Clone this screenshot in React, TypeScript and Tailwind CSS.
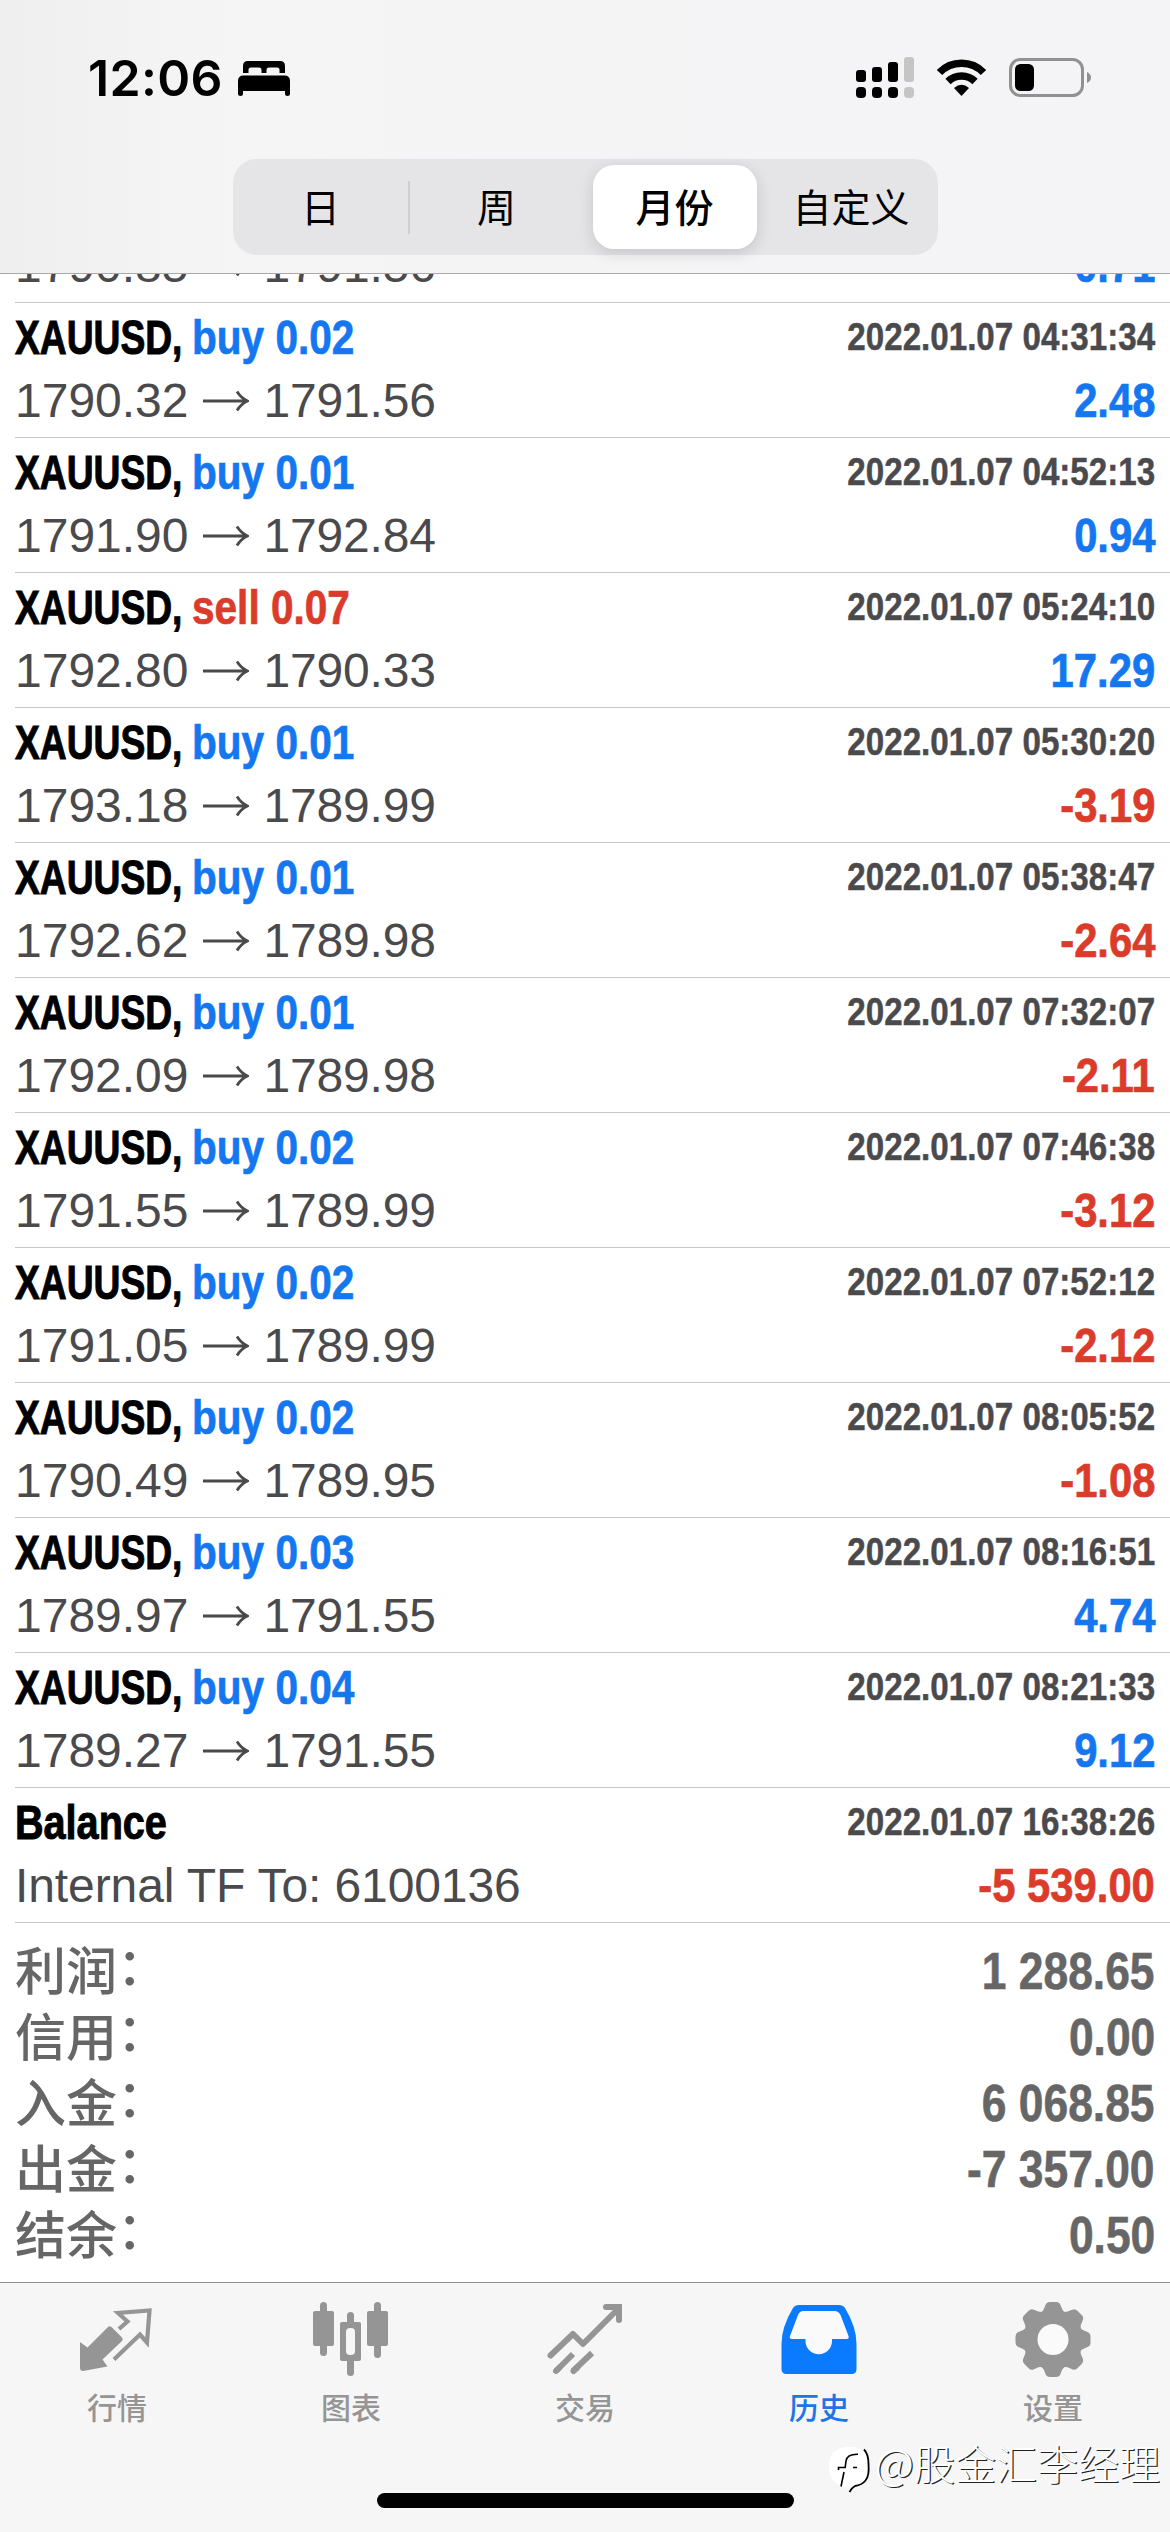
import React, { useState } from 'react';
import clsx from 'clsx';

interface Deal {
  symbol?: string;
  side?: 'buy' | 'sell';
  volume?: string;
  time?: string;
  open?: string;
  close?: string;
  comment?: string;
  profit: string;
}

const deals: Deal[] = [
  { symbol: 'XAUUSD', side: 'buy', volume: '0.02', time: '2022.01.07 04:31:34', open: '1790.32', close: '1791.56', profit: '2.48' },
  { symbol: 'XAUUSD', side: 'buy', volume: '0.01', time: '2022.01.07 04:52:13', open: '1791.90', close: '1792.84', profit: '0.94' },
  { symbol: 'XAUUSD', side: 'sell', volume: '0.07', time: '2022.01.07 05:24:10', open: '1792.80', close: '1790.33', profit: '17.29' },
  { symbol: 'XAUUSD', side: 'buy', volume: '0.01', time: '2022.01.07 05:30:20', open: '1793.18', close: '1789.99', profit: '-3.19' },
  { symbol: 'XAUUSD', side: 'buy', volume: '0.01', time: '2022.01.07 05:38:47', open: '1792.62', close: '1789.98', profit: '-2.64' },
  { symbol: 'XAUUSD', side: 'buy', volume: '0.01', time: '2022.01.07 07:32:07', open: '1792.09', close: '1789.98', profit: '-2.11' },
  { symbol: 'XAUUSD', side: 'buy', volume: '0.02', time: '2022.01.07 07:46:38', open: '1791.55', close: '1789.99', profit: '-3.12' },
  { symbol: 'XAUUSD', side: 'buy', volume: '0.02', time: '2022.01.07 07:52:12', open: '1791.05', close: '1789.99', profit: '-2.12' },
  { symbol: 'XAUUSD', side: 'buy', volume: '0.02', time: '2022.01.07 08:05:52', open: '1790.49', close: '1789.95', profit: '-1.08' },
  { symbol: 'XAUUSD', side: 'buy', volume: '0.03', time: '2022.01.07 08:16:51', open: '1789.97', close: '1791.55', profit: '4.74' },
  { symbol: 'XAUUSD', side: 'buy', volume: '0.04', time: '2022.01.07 08:21:33', open: '1789.27', close: '1791.55', profit: '9.12' },
  { symbol: 'Balance', time: '2022.01.07 16:38:26', comment: 'Internal TF To: 6100136', profit: '-5 539.00' },
];

const summary = [
  { label: '利润', value: '1 288.65' },
  { label: '信用', value: '0.00' },
  { label: '入金', value: '6 068.85' },
  { label: '出金', value: '-7 357.00' },
  { label: '结余', value: '0.50' },
];

const periods = [
  { label: '日', width: 'w-[176px]' },
  { label: '周', width: 'w-[176px]' },
  { label: '月份', width: 'w-[180px]' },
  { label: '自定义', width: 'w-[173px]' },
];

function StatusBar() {
  return (
    <div className="flex h-[159px] items-start justify-between pl-[88px] pr-[78px] pt-[52px]">
      <div className="flex items-start">
        <span className="w-[150px] whitespace-nowrap font-['Inter',sans-serif] text-[50px] font-semibold leading-[52px] tracking-[0.3px] text-black">
          12:06
        </span>
        <svg className="mt-[9px] h-[35px] w-[52px]" viewBox="0 0 52 35" fill="#000">
          <path d="M5 12V5Q5 0 10 0H42Q47 0 47 5V12H41.500V9Q41.500 6.500 39 6.500H31Q28.500 6.500 28.500 9V12H23.500V9Q23.500 6.500 21 6.500H13Q10.500 6.500 10.500 9V12Z" />
          <path d="M0 20Q0 14.500 5.500 14.500H46.500Q52 14.500 52 20V33Q52 35 49.500 35Q47 35 47 33V30H5V33Q5 35 2.500 35Q0 35 0 33Z" />
        </svg>
      </div>
      <div className="flex items-start">
        <svg className="mt-[5px] h-[42px] w-[58px]" viewBox="0 0 58 42" fill="#000">
          <rect x="0" y="13" width="10" height="12" rx="3" />
          <rect x="16" y="10" width="10" height="15" rx="3" />
          <rect x="32" y="5" width="10" height="20" rx="3" />
          <rect x="48" y="0" width="10" height="25" rx="3" fill="#c5c5c5" />
          <rect x="0" y="30" width="10" height="11" rx="4" />
          <rect x="16" y="30" width="10" height="11" rx="4" />
          <rect x="32" y="30" width="10" height="11" rx="4" />
          <rect x="48" y="30" width="10" height="11" rx="4" fill="#c5c5c5" />
        </svg>
        <svg className="ml-[22px] mt-[7px] h-[37px] w-[51px]" viewBox="0 0 51 37" fill="none">
          <path d="M3.500 13.500Q12.500 4.200 25.500 4.200T47.500 13.500" stroke="#000" strokeWidth="7.500" />
          <path d="M12 22.500Q17.500 17 25.500 17T39 22.500" stroke="#000" strokeWidth="7.500" />
          <path d="M18 29Q25.500 22.500 33 29L25.500 37Z" fill="#000" />
        </svg>
        <svg className="ml-[22px] mt-[6px] h-[39px] w-[83px]" viewBox="0 0 83 39" fill="none">
          <rect x="1.500" y="1.500" width="72" height="36" rx="10" stroke="#919191" strokeWidth="3" />
          <rect x="6" y="6" width="19" height="27" rx="5.500" fill="#000" />
          <path d="M78 14Q82 16 82 19.500T78 25Z" fill="#919191" />
        </svg>
      </div>
    </div>
  );
}

function PeriodTabs() {
  const [active, setActive] = useState(2);

  return (
    <div className="mx-auto flex h-[96px] w-[705px] items-center rounded-[24px] bg-[#e5e5e7]">
      {periods.map((period, i) => (
        <React.Fragment key={period.label}>
          {i === 1 && <span className="-mx-px h-[53px] w-[2px] bg-[#cfcfd1]" />}
          <button onClick={() => setActive(i)} className={clsx('px-[8px]', period.width)}>
            <span
              className={clsx(
                "flex h-[84px] items-center justify-center whitespace-nowrap pb-[4px] font-['Noto_Sans_CJK_SC',sans-serif] text-[39px] text-black",
                active === i
                  ? 'rounded-[21px] bg-white font-medium shadow-[0_4px_16px_rgba(0,0,0,0.14)]'
                  : 'font-normal'
              )}
            >
              {period.label}
            </span>
          </button>
        </React.Fragment>
      ))}
    </div>
  );
}

function PriceLine({ deal }: { deal: Deal }) {
  return (
    <div className="flex h-[63px] justify-between whitespace-nowrap text-[48px] leading-[63px]">
      {deal.comment ? (
        <span className="tracking-[-0.1px] text-[#4a4a4d]">{deal.comment}</span>
      ) : (
        <div className="flex items-center text-[#4a4a4d]">
          <span>{deal.open}</span>
          <svg className="ml-[14px] mr-[15px] h-[22px] w-[46px]" viewBox="0 0 46 22" fill="none" stroke="currentColor" strokeWidth="2.800">
            <path d="M0 11H44M34 1.500Q38 8 44.500 11Q38 14 34 20.500" />
          </svg>
          <span className="tracking-[-0.2px]">{deal.close}</span>
        </div>
      )}
      <span
        className={clsx(
          'origin-right scale-x-[0.87] font-bold [-webkit-text-stroke:0.7px]',
          deal.profit.startsWith('-') ? 'text-[#db3b2b]' : 'text-[#1477ef]'
        )}
      >
        {deal.profit}
      </span>
    </div>
  );
}

function DealRow({ deal }: { deal: Deal }) {
  return (
    <div className="ml-[15px] h-[135px] shrink-0 border-b border-[#c6c6c8] pr-[15px] pt-[3px]">
      <div className="flex h-[63px] justify-between whitespace-nowrap text-[48px] font-bold leading-[63px]">
        {deal.side ? (
          <div className="flex">
            <span className="w-[177px]">
              <span className="inline-block origin-left scale-x-[0.775] text-black [-webkit-text-stroke:1px]">{deal.symbol},</span>
            </span>
            <span
              className={clsx(
                'inline-block origin-left scale-x-[0.845] [-webkit-text-stroke:0.7px]',
                deal.side === 'buy' ? 'text-[#1477ef]' : 'text-[#db3b2b]'
              )}
            >
              {deal.side} {deal.volume}
            </span>
          </div>
        ) : (
          <span className="origin-left scale-x-[0.825] text-black [-webkit-text-stroke:1px]">{deal.symbol}</span>
        )}
        <span className="origin-right scale-x-[0.85] text-[39px] leading-[61px] text-[#4a4a4d] [-webkit-text-stroke:0.5px]">
          {deal.time}
        </span>
      </div>
      <PriceLine deal={deal} />
    </div>
  );
}

function QuotesIcon() {
  return (
    <svg className="h-[76px] w-[76px]" viewBox="0 0 76 76" fill="none">
      <path d="M1 41L8.500 46.500L29 26Q30.500 24.500 32.500 26L43 36.500Q44.500 38.500 43 40L23.500 58.500L28.500 65.500L4 70Q1 70 1 67Z" fill="#959595" />
      <path d="M40 28L48.500 20.500L39 12L70.500 9.500L68 41.500L61 33.500L35 58.500" stroke="#959595" strokeWidth="4.200" />
    </svg>
  );
}

function ChartIcon() {
  return (
    <svg className="h-[76px] w-[76px]" viewBox="0 0 76 76" fill="#959595">
      <rect x="7" y="1" width="7" height="54" rx="3.500" />
      <rect x="0" y="10" width="21" height="35" rx="2" />
      <rect x="34" y="11" width="7" height="64" rx="3.500" />
      <rect x="27" y="21" width="21" height="39" rx="2" />
      <rect x="33" y="27" width="9" height="27" rx="4" fill="#f6f6f6" />
      <rect x="61" y="1" width="7" height="56" rx="3.500" />
      <rect x="54" y="10" width="21" height="35" rx="2" />
    </svg>
  );
}

function TradeIcon() {
  return (
    <svg className="h-[76px] w-[76px]" viewBox="0 0 76 76" fill="none" stroke="#959595" strokeWidth="6" strokeLinecap="round">
      <path d="M3.500 54.500L26 33L36 43L71 8" strokeLinejoin="round" />
      <path d="M59 6H72V19" />
      <path d="M9 70L26 53M26 70L45 52" strokeLinecap="butt" />
      <path d="M9 70L12 67M26.500 70L30 67" />
    </svg>
  );
}

function HistoryIcon() {
  return (
    <svg className="h-[76px] w-[76px]" viewBox="0 0 76 76">
      <path d="M12 7Q14 4 18 4H58Q62 4 64 7Q75.500 26 75.500 43V68Q75.500 73 70.500 73H5.500Q.5 73 .5 68V43Q.5 26 12 7Z" fill="#0a7aff" />
      <path d="M17 14Q18.500 10 22.500 10H53.500Q57.500 10 59.500 14L67.500 35Q68.500 38 65.500 38H51V41A13.300 13.300 0 0 1 24.500 41V38H11Q8 38 9 35Z" fill="#fafafa" />
    </svg>
  );
}

function SettingsIcon() {
  return (
    <svg className="h-[76px] w-[76px]" viewBox="0 0 76 76">
      <g fill="#959595">
        <circle cx="38" cy="38.500" r="30" />
        {[0, 45, 90, 135, 180, 225, 270, 315].map((angle) => (
          <path
            key={angle}
            transform={`rotate(${angle} 38 38.5)`}
            d="M26 12Q29 9 30.500 4Q31.500 1 35 1H41Q44.500 1 45.500 4Q47 9 50 12Z"
          />
        ))}
      </g>
      <circle cx="38" cy="38.500" r="15.500" fill="#fafafa" />
    </svg>
  );
}

const tabs = [
  { label: '行情', icon: QuotesIcon },
  { label: '图表', icon: ChartIcon },
  { label: '交易', icon: TradeIcon },
  { label: '历史', icon: HistoryIcon, active: true },
  { label: '设置', icon: SettingsIcon },
];

function TabBar() {
  return (
    <nav className="relative flex h-[250px] shrink-0 flex-col border-t border-[#8f8f8f] bg-[#f6f6f6]">
      <div className="flex pt-[18px]">
        {tabs.map(({ label, icon: Icon, active }) => (
          <button key={label} className="flex flex-1 flex-col items-center">
            <Icon />
            <span
              className={clsx(
                "mt-[7px] font-['Noto_Sans_CJK_SC',sans-serif] text-[30px] font-medium leading-[44px]",
                active ? 'text-[#1f75e8]' : 'text-[#959595]'
              )}
            >
              {label}
            </span>
          </button>
        ))}
      </div>
      <div className="mx-auto mb-[24px] mt-auto h-[15px] w-[417px] rounded-full bg-black" />

      {/* author mark over the bar */}
      <div className="absolute right-[10px] top-[154px] flex items-start">
        <svg className="mr-[4px] mt-[9px] h-[48px] w-[42px]" viewBox="0 0 42 48" fill="none">
          <path d="M0 20Q0 1 20 1Q40 1 40 20Q40 41 24 41L20 46L21 41Q0 41 0 20Z" fill="#fff" />
          <path d="M35 3.500Q39.500 8 39.500 18Q40.500 30 36.500 34.500Q33 39 26 40Q22.500 42 20.500 46" stroke="#000" strokeWidth="1.800" />
          <path d="M29 8.300Q18 8 17 15L16.200 21.500H9.500V24M15 26L12 40.500M24 21.500H28" stroke="#000" strokeWidth="1.600" />
        </svg>
        <span className="whitespace-nowrap font-['Noto_Sans_CJK_SC',sans-serif] text-[41px] font-light leading-[50px] text-white [text-shadow:1.200px_1.200px_0_#222]">
          <span className="text-[43px] leading-none">@</span>股金汇李经理
        </span>
      </div>
    </nav>
  );
}

export default function App() {
  return (
    <div className="flex h-[2532px] w-[1170px] flex-col overflow-hidden bg-white font-['Liberation_Sans',Arial,sans-serif]">
      <header className="h-[274px] shrink-0 border-b border-[#a9a9a9] bg-linear-to-r from-[#efefef] via-[#f5f5f6] via-20% to-[#f4f4f6]">
        <StatusBar />
        <PeriodTabs />
      </header>

      <main className="flex flex-1 flex-col overflow-hidden">
        {/* the list is scrolled, only the end of this deal shows */}
        <div className="-mt-[40px] ml-[15px] h-[69px] shrink-0 border-b border-[#c6c6c8] pr-[15px]">
          <PriceLine deal={{ open: '1790.85', close: '1791.56', profit: '0.71' }} />
        </div>
        {deals.map((deal) => (
          <DealRow key={deal.time} deal={deal} />
        ))}
        <div className="px-[15px] pt-[15px]">
          {summary.map((item) => (
            <div key={item.label} className="flex h-[66px] justify-between whitespace-nowrap text-[51px] text-[#666]">
              <span className="flex font-['Noto_Sans_CJK_SC',sans-serif] font-medium">
                <span className="leading-[60px]">{item.label}</span>
                <span className="leading-[50px]">：</span>
              </span>
              <span className="origin-right scale-x-[0.87] font-bold leading-[67px] [-webkit-text-stroke:0.6px]">{item.value}</span>
            </div>
          ))}
        </div>
      </main>

      <TabBar />
    </div>
  );
}
